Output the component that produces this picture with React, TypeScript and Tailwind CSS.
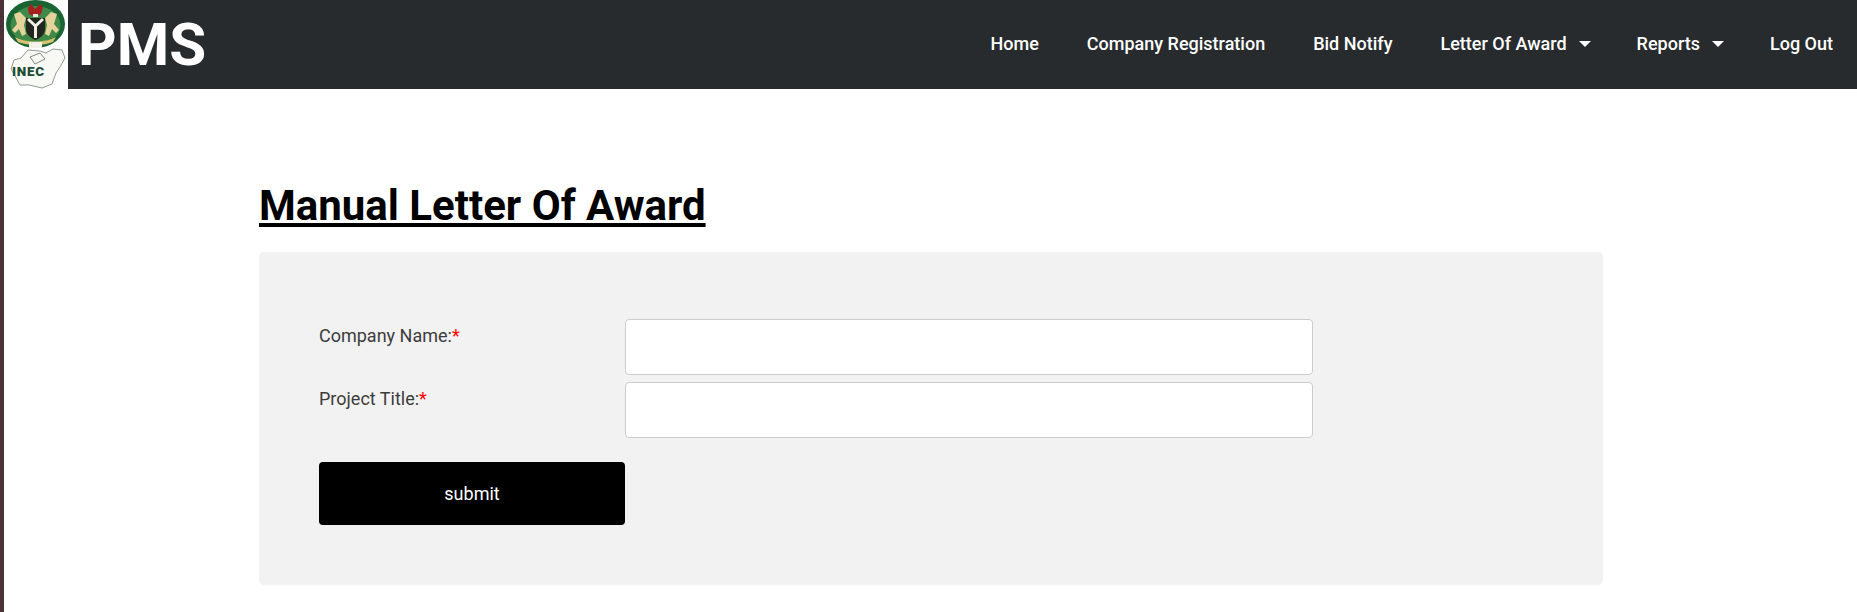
import React from 'react';

const navItems = [
  { label: 'Home' },
  { label: 'Company Registration' },
  { label: 'Bid Notify' },
  { label: 'Letter Of Award', caret: true },
  { label: 'Reports', caret: true },
  { label: 'Log Out' },
];

// coat of arms above the Nigeria map, as in the INEC logo
const Logo = () => (
  <svg viewBox="0 0 64 89" className="w-[64px] h-[89px] block bg-white">
    <ellipse cx="31.5" cy="24" rx="29.5" ry="24" fill="#1a6433" />
    <ellipse cx="31.5" cy="25" rx="25" ry="19" fill="#3f8a49" />
    <path d="M27 4 L31 9 L36 4 L39 8 L37 14 L31 17 L25 14 L24 8 Z" fill="#a5201f" />
    <path d="M29 14 H34 V17 H29 Z" fill="#e8e8dc" />
    <path d="M10 14 L16 12 L22 18 L20 25 L22 34 L18 36 L15 29 L11 33 L8 30 L13 24 Z" fill="#e4d49c" />
    <path d="M53 14 L47 12 L41 18 L43 25 L41 34 L45 36 L48 29 L52 33 L55 30 L50 24 Z" fill="#e4d49c" />
    <path d="M22 18 H41 V29 C41 35 36 38 31.5 40 C27 38 22 35 22 29 Z" fill="#23261f" />
    <path d="M24 19 L31.5 26 L39 19 M31.5 26 V38" stroke="#efefe6" strokeWidth="3" fill="none" />
    <path d="M11 37 C21 43 42 43 52 37 L49 42 C39 46 24 46 14 42 Z" fill="#d7c36f" />
    <path d="M25 42 H38 V48 H25 Z" fill="#f2f2ea" />
    <path
      d="M7 69 L10 60 L17 58 L24 50 L36 51 L42 53 L49 49 L58 50 L61 58 L56 67 L52 73 L48 84 L38 88 L25 85 L16 85 L11 76 Z"
      fill="#f8f9f5"
      stroke="#8f9b90"
      strokeWidth="1"
    />
    <path d="M26 57 L36 53 L41 59 L31 64 Z" fill="#f8f9f5" stroke="#7c877e" strokeWidth="1" />
    <text x="8" y="76" fontSize="13.5" letterSpacing="0.7" fontWeight="900" fill="#1c4d33" fontFamily="Roboto, sans-serif">
      INEC
    </text>
  </svg>
);

export default function App() {
  return (
    <div className="min-h-[612px] flex bg-white font-['Roboto',sans-serif]">
      <div className="w-[4px] shrink-0 bg-[#4a3238]" />
      <div className="flex-1 min-w-0">
        <header className="flex h-[89px]">
          <Logo />
          <div className="flex-1 flex items-center justify-between bg-[#272b2d] pl-[10px] pr-[24px]">
            <span className="text-[60px] leading-none font-bold text-white">PMS</span>
            <nav className="flex items-center gap-[48px] mb-[2px] text-white text-[18px] font-medium">
              {navItems.map((item) => (
                <a key={item.label} className="flex items-center">
                  {item.label}
                  {item.caret && (
                    <span className="ml-[12px] mr-[-2px] mt-[1px] w-0 h-0 border-x-[6px] border-x-transparent border-t-[6px] border-t-white" />
                  )}
                </a>
              ))}
            </nav>
          </div>
        </header>

        <main className="pt-[93px] pl-[255px] w-[1599px]">
          <h1 className="text-[42px] leading-[48px] font-bold text-black underline w-fit mb-[22px]">
            Manual Letter Of Award
          </h1>
          <div className="bg-[#f2f2f2] rounded-[5px] pt-[67px] pb-[60px] pl-[60px] pr-[60px]">
            <div className="grid grid-cols-[306px_688px] gap-y-[7px]">
              <label className="text-[18px] text-[#3c3c3c] pt-[4px] leading-[26px]">
                Company Name:<span className="text-[#f00]">*</span>
              </label>
              <input className="h-[56px] bg-white border border-[#cccccc] rounded-[4px]" />
              <label className="text-[18px] text-[#3c3c3c] pt-[4px] leading-[26px]">
                Project Title:<span className="text-[#f00]">*</span>
              </label>
              <input className="h-[56px] bg-white border border-[#cccccc] rounded-[4px]" />
            </div>
            <button className="block mt-[24px] w-[306px] h-[63px] bg-black text-white text-[18px] rounded-[4px]">
              submit
            </button>
          </div>
        </main>
      </div>
    </div>
  );
}
